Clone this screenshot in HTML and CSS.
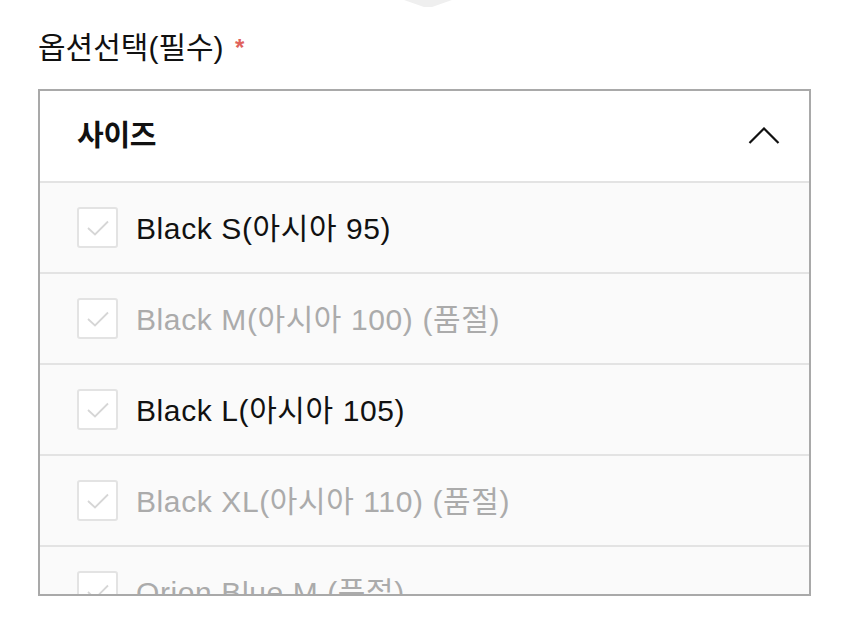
FILE: index.html
```html
<!DOCTYPE html>
<html lang="ko">
<head>
<meta charset="utf-8">
<link rel="stylesheet" href="styles.css">
</head>
<body>
<div class="page">
  <div class="tab"><svg width="48" height="8" viewBox="0 0 48 8"><polygon points="0,0 48,0 28,7 20,7" fill="#efefef"/></svg></div>
  <div class="label">옵션선택(필수) <span class="req">*</span></div>
  <div class="box">
    <div class="head">
      <span class="head-title">사이즈</span>
      <svg class="chev" width="32" height="17" viewBox="0 0 32 17"><polyline points="1.5,16 16,1.5 30.5,16" fill="none" stroke="#111" stroke-width="2.2"/></svg>
    </div>
    <div class="row">
      <span class="cb"><svg width="22" height="16" viewBox="0 0 22 16"><polyline points="1,8 8,14.5 21,1.5" fill="none" stroke="#d6d6d6" stroke-width="1.8"/></svg></span>
      <span class="txt">Black S(아시아 95)</span>
    </div>
    <div class="row off">
      <span class="cb"><svg width="22" height="16" viewBox="0 0 22 16"><polyline points="1,8 8,14.5 21,1.5" fill="none" stroke="#d6d6d6" stroke-width="1.8"/></svg></span>
      <span class="txt">Black M(아시아 100) (품절)</span>
    </div>
    <div class="row">
      <span class="cb"><svg width="22" height="16" viewBox="0 0 22 16"><polyline points="1,8 8,14.5 21,1.5" fill="none" stroke="#d6d6d6" stroke-width="1.8"/></svg></span>
      <span class="txt">Black L(아시아 105)</span>
    </div>
    <div class="row off">
      <span class="cb"><svg width="22" height="16" viewBox="0 0 22 16"><polyline points="1,8 8,14.5 21,1.5" fill="none" stroke="#d6d6d6" stroke-width="1.8"/></svg></span>
      <span class="txt">Black XL(아시아 110) (품절)</span>
    </div>
    <div class="row off">
      <span class="cb"><svg width="22" height="16" viewBox="0 0 22 16"><polyline points="1,8 8,14.5 21,1.5" fill="none" stroke="#d6d6d6" stroke-width="1.8"/></svg></span>
      <span class="txt">Orion Blue M (품절)</span>
    </div>
  </div>
</div>
</body>
</html>
```
FILE: styles.css
```css
html, body {
  margin: 0;
  padding: 0;
  background: #fff;
}
body {
  font-family: "Liberation Sans", "Noto Sans CJK KR", sans-serif;
  color: #111;
}
.page {
  width: 850px;
  height: 626px;
  overflow: hidden;
  padding: 0 39px 0 38px;
  box-sizing: border-box;
}
.tab {
  height: 8px;
  display: flex;
  justify-content: center;
  padding-left: 7px;
}
.tab svg { display: block; }
.label {
  margin-top: 20px;
  font-size: 30px;
  line-height: 40px;
  height: 40px;
}
.req {
  color: #e0625c;
  font-size: 24px;
  font-weight: bold;
  vertical-align: 2px;
  margin-left: 3px;
}
.box {
  margin-top: 21px;
  border: 2px solid #a9a9a9;
  height: 503px;
  overflow: hidden;
}
.head {
  height: 90px;
  display: flex;
  align-items: center;
  justify-content: space-between;
  padding: 0 29px 0 37px;
  background: #fff;
}
.head-title {
  font-size: 29px;
  font-weight: bold;
  letter-spacing: -0.3px;
  margin-top: -6px;
}
.chev { display: block; margin-top: -2px; }
.row {
  height: 89px;
  border-top: 2px solid #e3e3e3;
  background: #fafafa;
  display: flex;
  align-items: center;
  padding-left: 37px;
  gap: 18px;
}
.cb {
  width: 41px;
  height: 41px;
  box-sizing: border-box;
  border: 2px solid #e3e3e3;
  border-radius: 3px;
  background: #fff;
  display: flex;
  align-items: center;
  justify-content: center;
}
.cb svg { display: block; }
.txt {
  font-size: 30px;
  letter-spacing: 0.6px;
  margin-top: -3px;
}
.off .txt { color: #ababab; }
```
